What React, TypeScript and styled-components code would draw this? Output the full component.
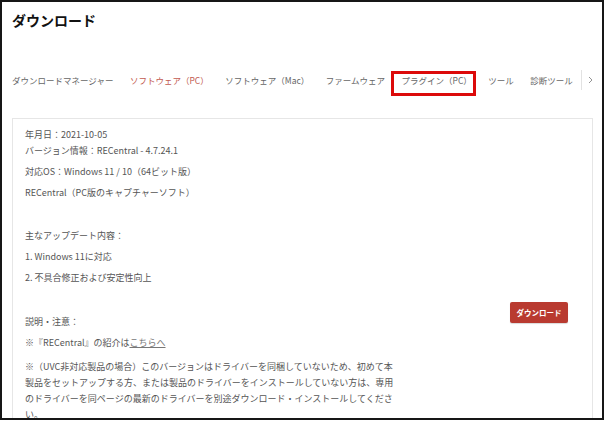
import React from "react";
import styled, { createGlobalStyle } from "styled-components";

const Global = createGlobalStyle`
  html, body { margin: 0; padding: 0; background: #ffffff; }
  body { font-family: "Noto Sans CJK JP", "Noto Sans", sans-serif; }
  * { box-sizing: border-box; }
`;

const Frame = styled.div`
  width: 604px;
  height: 420px;
  border: 2px solid #161616;
  background: #ffffff;
  overflow: hidden;
  padding: 8px 9px 0 10px;
`;

const Title = styled.h1`
  margin: 0;
  font-size: 14px;
  line-height: 20px;
  font-weight: 700;
  color: #111;
`;

const Tabs = styled.nav`
  display: flex;
  align-items: center;
  margin-top: 42px;
  height: 16px;
`;

const Tab = styled.span<{ $active?: boolean; $last?: boolean }>`
  position: relative;
  font-size: 8.5px;
  line-height: 16px;
  white-space: nowrap;
  color: ${(p) => (p.$active ? "#c25a4f" : "#666")};
  margin-right: ${(p) => (p.$last ? 8.5 : 16.5)}px;
`;

const Marker = styled.span`
  position: absolute;
  top: -1px;
  bottom: -8px;
  left: -11px;
  right: -4px;
  border: 3px solid #dc0a0a;
`;

const Divider = styled.span`
  width: 1px;
  height: 20px;
  background: #e2e2e2;
`;

const Chevron = styled.span`
  margin-left: 6px;
  display: flex;
  align-items: center;
`;

const Card = styled.section`
  margin-top: 30px;
  border: 1px solid #e6e6e6;
  display: flex;
  justify-content: space-between;
  align-items: flex-start;
  padding: 8px 24px 0 12px;
  height: 400px;
`;

const Content = styled.div`
  color: #555;
  font-size: 9px;
  line-height: 16px;
`;

const P = styled.p<{ $before?: number }>`
  margin: ${(p) => p.$before ?? 0}px 0 5px;
  white-space: nowrap;
`;

const Link = styled.a`
  color: #777;
  text-decoration: underline;
`;

const Side = styled.div`
  display: flex;
  padding-top: 175px;
`;

const Button = styled.button`
  width: 58px;
  height: 21px;
  border: none;
  border-radius: 2px;
  background: #b93a30;
  color: #fff;
  font-family: inherit;
  font-size: 7.5px;
  font-weight: 700;
  padding: 0;
  box-shadow: 0 1px 1px rgba(0, 0, 0, 0.15);
`;

export default function App() {
  return (
    <>
      <Global />
      <Frame>
        <Title>ダウンロード</Title>
        <Tabs>
          <Tab>ダウンロードマネージャー</Tab>
          <Tab $active>ソフトウェア（PC）</Tab>
          <Tab>ソフトウェア（Mac）</Tab>
          <Tab>ファームウェア</Tab>
          <Tab>
            プラグイン（PC）
            <Marker />
          </Tab>
          <Tab>ツール</Tab>
          <Tab $last>診断ツール</Tab>
          <Divider />
          <Chevron>
            <svg width="5" height="8" viewBox="0 0 5 8">
              <path d="M1 1 L4 4 L1 7" fill="none" stroke="#888" strokeWidth="0.9" />
            </svg>
          </Chevron>
        </Tabs>
        <Card>
          <Content>
            <P>
              年月日：2021-10-05
              <br />
              バージョン情報：RECentral - 4.7.24.1
            </P>
            <P>対応OS：Windows 11 / 10（64ビット版）</P>
            <P>RECentral（PC版のキャプチャーソフト）</P>
            <P $before={27}>主なアップデート内容：</P>
            <P>1. Windows 11に対応</P>
            <P>2. 不具合修正および安定性向上</P>
            <P $before={28}>説明・注意：</P>
            <P>
              ※『RECentral』の紹介は<Link href="#">こちらへ</Link>
            </P>
            <P $before={8}>
              ※（UVC非対応製品の場合）このバージョンはドライバーを同梱していないため、初めて本
              <br />
              製品をセットアップする方、または製品のドライバーをインストールしていない方は、専用
              <br />
              のドライバーを同ページの最新のドライバーを別途ダウンロード・インストールしてくださ
              <br />
              い。
            </P>
          </Content>
          <Side>
            <Button>ダウンロード</Button>
          </Side>
        </Card>
      </Frame>
    </>
  );
}
